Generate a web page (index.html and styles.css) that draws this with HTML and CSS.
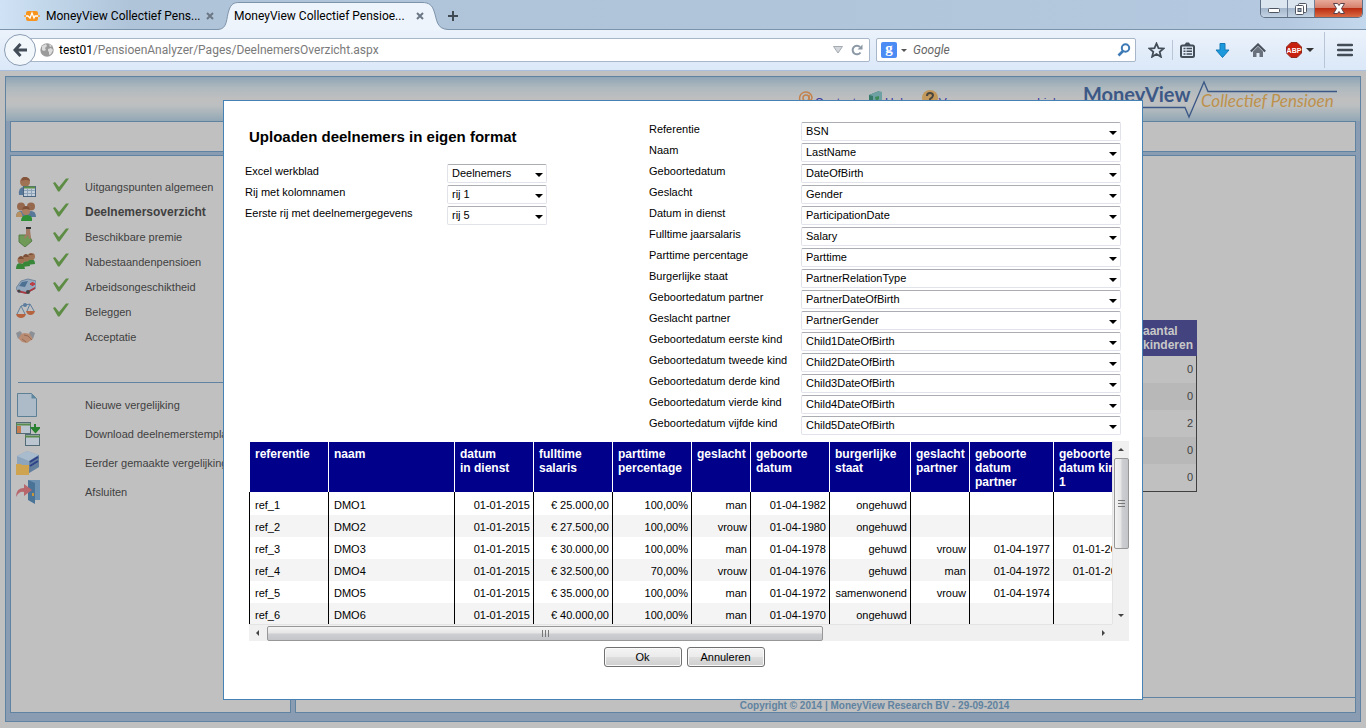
FILE: index.html
```html
<!DOCTYPE html>
<html lang="nl">
<head>
<meta charset="utf-8">
<title>MoneyView Collectief Pensioen</title>
<link rel="stylesheet" href="styles.css">
</head>
<body>
<header class="browser">
  <div class="tabstrip">
    <div class="tab">
      <svg class="favicon" width="16" height="16" viewBox="0 0 16 16"><rect x="2" y="3" width="12" height="10" rx="2" fill="#f7941d"/><path d="M0 8h4l2 2 2-5 2 5 1-2h5" fill="none" stroke="#fff" stroke-width="1.3"/><path d="M0 8h2M14 8h2" stroke="#f7941d" stroke-width="1.5"/></svg>
      <span class="tab-title">MoneyView Collectief Pens...</span>
      <button class="tab-close" aria-label="Tabblad sluiten"><svg width="8" height="8" viewBox="0 0 8 8"><path d="M1 1l6 6M7 1l-6 6" stroke="#6b7785" stroke-width="2"/></svg></button>
    </div>
    <div class="tab tab-active">
      <svg class="tab-shape" viewBox="0 0 230 30" preserveAspectRatio="none"><path d="M0 29.5C10 29 8 18 11 10C13 4 16 2.500 21 2.500H204C211 2.500 214 5 216 11C219 19 218 29 230 29.500V30H0Z" fill="#eef4fb"/><path d="M0 29.5C10 29 8 18 11 10C13 4 16 2.500 21 2.500H204C211 2.500 214 5 216 11C219 19 218 29 230 29.500" fill="none" stroke="#7d93aa"/></svg>
      <span class="tab-title">MoneyView Collectief Pensioe...</span>
      <button class="tab-close" aria-label="Tabblad sluiten"><svg width="8" height="8" viewBox="0 0 8 8"><path d="M1 1l6 6M7 1l-6 6" stroke="#6b7785" stroke-width="2"/></svg></button>
    </div>
    <button class="tab-new" aria-label="Nieuw tabblad"><svg width="10" height="10" viewBox="0 0 10 10"><path d="M5 0v10M0 5h10" stroke="#3f4a55" stroke-width="2"/></svg></button>
    <div class="window-buttons">
      <button class="wb" aria-label="Minimaliseren"><svg width="12" height="12" viewBox="0 0 12 12"><rect x=".5" y="5.500" width="11" height="4" rx="1" fill="#fff" stroke="#4f5561"/></svg></button>
      <button class="wb" aria-label="Verkleinen"><svg width="12" height="12" viewBox="0 0 12 12"><rect x="3.500" y=".5" width="8" height="9" rx="1" fill="#fff" stroke="#4f5561"/><rect x=".5" y="2.500" width="8" height="9" rx="1" fill="#fff" stroke="#4f5561"/><rect x="3" y="5.500" width="3" height="3" fill="#9fb0c2" stroke="#4f5561"/></svg></button>
      <button class="wb wb-close" aria-label="Sluiten"><svg width="12" height="11" viewBox="0 0 12 11"><path d="M.5 .5h4L6 2.500 7.500 .5h4L8.500 5.500l3 5h-4L6 8.500 4.500 10.500h-4l3-5z" fill="#fff" stroke="#5a4048"/></svg></button>
    </div>
  </div>
  <div class="toolbar">
    <button class="back" aria-label="Terug"><svg width="14" height="14" viewBox="0 0 14 14"><path d="M7.500 1L2 7l5.500 6M2.500 7H14" fill="none" stroke="#434d58" stroke-width="3"/></svg></button>
    <label class="urlbar">
      <svg width="14" height="14" viewBox="0 0 14 14"><circle cx="7" cy="7" r="6.700" fill="#9b9b9b"/><path d="M2 3l4-2 1 2-2 2 1 2-2 1-2-1zM8 6l3-1 2 2-2 4-2 1V9L8 8zM9 1l3 2-2 1z" fill="#dcdcdc"/></svg>
      <span class="url"><b>test01</b>/PensioenAnalyzer/Pages/DeelnemersOverzicht.aspx</span>
      <svg width="10" height="8" viewBox="0 0 10 8"><path d="M.5 .5h9L5 7z" fill="#d3d6da" stroke="#a5abb3"/></svg>
      <svg width="12" height="12" viewBox="0 0 12 12"><path d="M9.500 8.500A4.300 4.300 0 1 1 9 3" fill="none" stroke="#8b98a6" stroke-width="2"/><path d="M6.500 5.500H11.500V.5z" fill="#8b98a6"/></svg>
    </label>
    <div class="searchbar">
      <span class="engine">g</span><i class="caret"></i>
      <input class="search-input" type="text" placeholder="Google" aria-label="Zoeken">
      <svg width="14" height="14" viewBox="0 0 14 14"><circle cx="8.500" cy="5" r="3.700" fill="none" stroke="#3d7ab5" stroke-width="2"/><path d="M6 8L1.500 12.500" stroke="#3d7ab5" stroke-width="2.600"/></svg>
    </div>
    <div class="tools">
      <button class="tool" aria-label="Bladwijzer"><svg width="17" height="16" viewBox="0 0 17 16"><path d="M8.500 1.500l2 4.700 5 .4-3.800 3.300 1.200 4.900-4.400-2.700-4.400 2.700 1.200-4.900L1.500 6.600l5-.4z" fill="none" stroke="#434d58" stroke-width="1.800"/></svg></button>
      <i class="tool-sep"></i>
      <button class="tool" aria-label="Bladwijzers tonen"><svg width="15" height="16" viewBox="0 0 15 16"><rect x="1" y="3.500" width="13" height="11.500" rx="1.500" fill="none" stroke="#434d58" stroke-width="2"/><path d="M4 3.500l2-3h3l2 3z" fill="#434d58"/><path d="M3.500 6.500h2M3.500 9.200h2M3.500 12h2M6.500 6.500h5.500M6.500 9.200h5.500M6.500 12h5.500" stroke="#434d58" stroke-width="1.500"/></svg></button>
      <button class="tool" aria-label="Downloads"><svg width="15" height="15" viewBox="0 0 15 15"><path d="M5 .5h5V7h4L7.500 14.500 1 7h4z" fill="#1c98dc" stroke="#147ab6"/></svg></button>
      <button class="tool" aria-label="Startpagina"><svg width="16" height="15" viewBox="0 0 16 15"><path d="M.8 8.500L8 1.500l7.200 7" fill="none" stroke="#4a535d" stroke-width="2.200"/><path d="M3 8.500l5-5 5 5V14H9.500v-4h-3v4H3z" fill="#69727c"/></svg></button>
      <button class="tool tool-abp" aria-label="Adblock Plus"><svg width="16" height="16" viewBox="0 0 16 16"><path d="M5 .5h6L15.500 5v6L11 15.500H5L.5 11V5z" fill="#c8200f" stroke="#8e2a20"/><text x="8" y="10.500" class="abp">ABP</text></svg><i class="caret"></i></button>
      <i class="tool-sep tool-sep-tall"></i>
      <button class="tool" aria-label="Menu"><svg width="16" height="14" viewBox="0 0 16 14"><path d="M1 2h14M1 7h14M1 12h14" stroke="#434d58" stroke-width="2.500" stroke-linecap="round"/></svg></button>
    </div>
  </div>
</header>

<main class="viewport">
  <div class="frame">
    <div class="masthead">
      <nav class="links">
        <a href="#"><svg width="16" height="16" viewBox="0 0 16 16"><circle cx="8" cy="8" r="3" fill="none" stroke="#c4824c" stroke-width="1.500"/><path d="M11 5v5q3 1 3-3A6.300 6.300 0 1 0 12 13" fill="none" stroke="#c4824c" stroke-width="1.500"/></svg>Contact</a>
        <a href="#"><svg width="16" height="16" viewBox="0 0 16 16"><path d="M1 5l10-4v11L1 15z" fill="#36796a"/><path d="M1 5l4 1 9-4-3-1zM5 6v9l9-4V2z" fill="#6fa0a4"/><path d="M7 7l4-1v3l-3 2z" fill="#3d8a57"/></svg>Help</a>
        <a href="#"><svg width="16" height="16" viewBox="0 0 16 16"><circle cx="8" cy="8" r="8" fill="#c2995a"/><path d="M5 6q0-3 3-3t3 2.500Q11 7 8 9v2" fill="none" stroke="#4a4640" stroke-width="2"/></svg>Vragen en namen Links</a>
      </nav>
      <svg class="logo" width="262" height="42" viewBox="0 0 262 42" role="img" aria-label="MoneyView Collectief Pensioen"><path d="M3 30.500H104L108 40L123 5L127 14.500H256" fill="none" stroke="#3c5886" stroke-width="1.300"/><text x="2" y="25" class="logo-main">MoneyView</text><text x="120" y="30" class="logo-sub">Collectief Pensioen</text></svg>
    </div>
    <div class="box topbox"></div>
    <div class="columns">
      <nav class="box side">
        <ul class="menu">
          <li><svg width="20" height="20" viewBox="0 0 20 20"><path d="M3 18q-1-8 5-8t6 8z" fill="#58789a"/><circle cx="9" cy="5" r="5" fill="#a07355"/><path d="M5 4q1-5 5-4 4 1 4 4-4-2-9 0z" fill="#835439"/><rect x="7.500" y="9.500" width="12" height="10" fill="#c3cedb" stroke="#4c6580"/><path d="M8 10.500h11" stroke="#5f9144" stroke-width="2"/><path d="M8 13.500h11M8 16.500h11M11.500 12v7M15.500 12v7" stroke="#8ea2b8"/></svg><svg class="check" width="16" height="14" viewBox="0 0 16 14"><path d="M0 5l2-1 4 5 7-8.500L16 .5 6.500 13.500H5z" fill="#5d8c44"/></svg><a href="#">Uitgangspunten algemeen</a></li>
          <li class="current"><svg width="20" height="20" viewBox="0 0 20 20"><path d="M0 15q0-6 5-6t6 6zM10 15q0-6 5-6t5 6z" fill="#58789a"/><path d="M0 15q0-6 5-5l2 5z" fill="#b89163"/><circle cx="5" cy="4.500" r="4" fill="#96694e"/><circle cx="15" cy="4.500" r="4" fill="#96694e"/><path d="M5 19q0-6 6-6t5 6z" fill="#2f8f35"/><circle cx="10" cy="9" r="4" fill="#ab7f63"/><path d="M6 8q1-4 4-4t4 4q-4-2-8 0z" fill="#7e5038"/></svg><svg class="check" width="16" height="14" viewBox="0 0 16 14"><path d="M0 5l2-1 4 5 7-8.500L16 .5 6.500 13.500H5z" fill="#5d8c44"/></svg><a href="#">Deelnemersoverzicht</a></li>
          <li><svg width="20" height="20" viewBox="0 0 20 20"><path d="M3 8l10 0 3 6-7 6-6-5z" fill="#6f9a58" stroke="#587c48"/><path d="M10 2h4l1 9-2 1-1-4-3 4-1-2 2-3z" fill="#a37b64"/><path d="M10 0h5v2h-5z" fill="#333"/></svg><svg class="check" width="16" height="14" viewBox="0 0 16 14"><path d="M0 5l2-1 4 5 7-8.500L16 .5 6.500 13.500H5z" fill="#5d8c44"/></svg><a href="#">Beschikbare premie</a></li>
          <li><svg width="20" height="20" viewBox="0 0 20 20"><path d="M0 17q0-6 4-6t5 6zM6 15q0-6 4-6t4 5zM11 13q0-6 4-6t4 5z" fill="#388739"/><circle cx="5" cy="8" r="3.500" fill="#a07355"/><circle cx="10" cy="6" r="3.500" fill="#a07355"/><circle cx="15.500" cy="4.500" r="3.500" fill="#a07355"/><path d="M2 7q1-3 3-3t3 3zM7 5q1-3 3-3t3 3zM12 3q2-3 6 0z" fill="#7c4f39"/></svg><svg class="check" width="16" height="14" viewBox="0 0 16 14"><path d="M0 5l2-1 4 5 7-8.500L16 .5 6.500 13.500H5z" fill="#5d8c44"/></svg><a href="#">Nabestaandenpensioen</a></li>
          <li><svg width="20" height="20" viewBox="0 0 20 20"><path d="M0 11L5 4l7-2 8 2v7l-9 5-9-1z" fill="#93a7bd" stroke="#71869d"/><path d="M3 9l3-4 6-1-3 6z" fill="#4c7193"/><path d="M1 13l9 2 9-5v2l-9 5-8-2z" fill="#ab3941"/><path d="M14 7h5M16.500 5v4" stroke="#bb3f45" stroke-width="2"/><circle cx="12" cy="15" r="2" fill="#444"/><circle cx="3" cy="14" r="1.500" fill="#444"/></svg><svg class="check" width="16" height="14" viewBox="0 0 16 14"><path d="M0 5l2-1 4 5 7-8.500L16 .5 6.500 13.500H5z" fill="#5d8c44"/></svg><a href="#">Arbeidsongeschiktheid</a></li>
          <li><svg width="20" height="20" viewBox="0 0 20 20"><path d="M5 4l9-2M5 4L1 12M5 4l4 8M14 2l-3 7M14 2l4 7" stroke="#5c7d9d" fill="none"/><circle cx="9" cy="3" r="2" fill="#5c7d9d"/><path d="M0 12h10q-1 4-5 4t-5-4zM10 9h9q-1 4-4.500 4T10 9z" fill="#b5643f"/></svg><svg class="check" width="16" height="14" viewBox="0 0 16 14"><path d="M0 5l2-1 4 5 7-8.500L16 .5 6.500 13.500H5z" fill="#5d8c44"/></svg><a href="#">Beleggen</a></li>
          <li><svg width="20" height="20" viewBox="0 0 20 20"><path d="M3 7l6-1 6 1 2 5-6 4-5-1-4-4z" fill="#b98c74"/><path d="M8 8l4 1 4 4M6 12l4 3" stroke="#976a55" fill="none"/><path d="M0 6l4-2 2 2-4 6zM19 6l-4-2-2 2 4 6z" fill="#8b9097"/></svg><span class="check"></span><a href="#">Acceptatie</a></li>
        </ul>
        <ul class="menu actions">
          <li><svg width="24" height="24" viewBox="0 0 24 24"><path d="M1.500 .5h14l5 5v18h-19z" fill="#adbbc8" stroke="#5d8097"/><path d="M15.500 .5v5h5z" fill="#5f88a0"/></svg><span class="check"></span><a href="#">Nieuwe vergelijking</a></li>
          <li><svg width="24" height="24" viewBox="0 0 24 24"><rect x=".5" y=".5" width="14" height="11" fill="#bcc6d0" stroke="#526b77"/><path d="M0 2.500h15" stroke="#5b8a4d" stroke-width="2"/><path d="M1 4h4v7H1z" fill="#c47b4d"/><rect x="9.500" y="12.500" width="14" height="11" fill="#bcc6d0" stroke="#526b77"/><path d="M9 14.500h15" stroke="#5b8a4d" stroke-width="2"/><path d="M19 2v4M16 6l3.500 4L23 6z" fill="#28812e" stroke="#28812e" stroke-width="2"/></svg><span class="check"></span><a href="#">Download deelnemerstemplate</a></li>
          <li><svg width="24" height="24" viewBox="0 0 24 24"><path d="M1 5l10-5 12 4v12l-10 6-12-5z" fill="#8ca5bd"/><path d="M1 5l10-5 12 4-10 6z" fill="#a9bccd"/><path d="M13 10l10-6v12l-10 6z" fill="#637f9d"/><path d="M14 11l8-5M14 15l8-5" stroke="#2f4289" stroke-width="2"/><path d="M0 13h5l1 1h7v10H0z" fill="#cfa450"/></svg><span class="check"></span><a href="#">Eerder gemaakte vergelijkingen</a></li>
          <li><svg width="24" height="24" viewBox="0 0 24 24"><path d="M12 0h12v20H12z" fill="#6d91b1"/><path d="M12 0l7 3v21l-7-4z" fill="#4a7398"/><path d="M17 13v3" stroke="#c6943d" stroke-width="2"/><path d="M0 17q0-9 8-9V4l8 6-8 6v-4q-5-1-8 5z" fill="#b7666c"/></svg><span class="check"></span><a href="#">Afsluiten</a></li>
        </ul>
      </nav>
      <section class="box content">
        <div class="content-body">
          <table class="backtable">
            <thead><tr><th>aantal<br>kinderen</th></tr></thead>
            <tbody><tr><td>0</td></tr><tr><td>0</td></tr><tr><td>2</td></tr><tr><td>0</td></tr><tr><td>0</td></tr></tbody>
          </table>
        </div>
        <footer class="copyright">Copyright © 2014 | MoneyView Research BV - 29-09-2014</footer>
      </section>
    </div>
  </div>

  <div class="overlay">
  <form class="dialog" role="dialog" aria-labelledby="dlg-title">
    <div class="settings">
      <div class="source">
        <h1 id="dlg-title">Uploaden deelnemers in eigen format</h1>
        <div class="field"><label for="s1">Excel werkblad</label><span class="drop"><select id="s1"><option>Deelnemers</option></select></span></div>
        <div class="field"><label for="s2">Rij met kolomnamen</label><span class="drop"><select id="s2"><option>rij 1</option></select></span></div>
        <div class="field"><label for="s3">Eerste rij met deelnemergegevens</label><span class="drop"><select id="s3"><option>rij 5</option></select></span></div>
      </div>
      <div class="mapping">
        <div class="field"><label for="m1">Referentie</label><span class="drop"><select id="m1"><option>BSN</option></select></span></div>
        <div class="field"><label for="m2">Naam</label><span class="drop"><select id="m2"><option>LastName</option></select></span></div>
        <div class="field"><label for="m3">Geboortedatum</label><span class="drop"><select id="m3"><option>DateOfBirth</option></select></span></div>
        <div class="field"><label for="m4">Geslacht</label><span class="drop"><select id="m4"><option>Gender</option></select></span></div>
        <div class="field"><label for="m5">Datum in dienst</label><span class="drop"><select id="m5"><option>ParticipationDate</option></select></span></div>
        <div class="field"><label for="m6">Fulltime jaarsalaris</label><span class="drop"><select id="m6"><option>Salary</option></select></span></div>
        <div class="field"><label for="m7">Parttime percentage</label><span class="drop"><select id="m7"><option>Parttime</option></select></span></div>
        <div class="field"><label for="m8">Burgerlijke staat</label><span class="drop"><select id="m8"><option>PartnerRelationType</option></select></span></div>
        <div class="field"><label for="m9">Geboortedatum partner</label><span class="drop"><select id="m9"><option>PartnerDateOfBirth</option></select></span></div>
        <div class="field"><label for="m10">Geslacht partner</label><span class="drop"><select id="m10"><option>PartnerGender</option></select></span></div>
        <div class="field"><label for="m11">Geboortedatum eerste kind</label><span class="drop"><select id="m11"><option>Child1DateOfBirth</option></select></span></div>
        <div class="field"><label for="m12">Geboortedatum tweede kind</label><span class="drop"><select id="m12"><option>Child2DateOfBirth</option></select></span></div>
        <div class="field"><label for="m13">Geboortedatum derde kind</label><span class="drop"><select id="m13"><option>Child3DateOfBirth</option></select></span></div>
        <div class="field"><label for="m14">Geboortedatum vierde kind</label><span class="drop"><select id="m14"><option>Child4DateOfBirth</option></select></span></div>
        <div class="field"><label for="m15">Geboortedatum vijfde kind</label><span class="drop"><select id="m15"><option>Child5DateOfBirth</option></select></span></div>
      </div>
    </div>
    <div class="scrollbox">
      <div class="scrollarea">
        <table class="preview">
          <colgroup><col class="c79"><col class="c126"><col class="c79"><col class="c79"><col class="c79"><col class="c59"><col class="c79"><col class="c81"><col class="c59"><col class="c84"><col class="c79"></colgroup>
          <thead><tr><th>referentie</th><th>naam</th><th>datum<br>in dienst</th><th>fulltime<br>salaris</th><th>parttime<br>percentage</th><th>geslacht</th><th>geboorte<br>datum</th><th>burgerlijke<br>staat</th><th>geslacht<br>partner</th><th>geboorte<br>datum<br>partner</th><th>geboorte<br>datum kind<br>1</th></tr></thead>
          <tbody>
            <tr><td>ref_1</td><td>DMO1</td><td>01-01-2015</td><td>€ 25.000,00</td><td>100,00%</td><td>man</td><td>01-04-1982</td><td>ongehuwd</td><td></td><td></td><td></td></tr>
            <tr><td>ref_2</td><td>DMO2</td><td>01-01-2015</td><td>€ 27.500,00</td><td>100,00%</td><td>vrouw</td><td>01-04-1980</td><td>ongehuwd</td><td></td><td></td><td></td></tr>
            <tr><td>ref_3</td><td>DMO3</td><td>01-01-2015</td><td>€ 30.000,00</td><td>100,00%</td><td>man</td><td>01-04-1978</td><td>gehuwd</td><td>vrouw</td><td>01-04-1977</td><td>01-01-2001</td></tr>
            <tr><td>ref_4</td><td>DMO4</td><td>01-01-2015</td><td>€ 32.500,00</td><td>70,00%</td><td>vrouw</td><td>01-04-1976</td><td>gehuwd</td><td>man</td><td>01-04-1972</td><td>01-01-2001</td></tr>
            <tr><td>ref_5</td><td>DMO5</td><td>01-01-2015</td><td>€ 35.000,00</td><td>100,00%</td><td>man</td><td>01-04-1972</td><td>samenwonend</td><td>vrouw</td><td>01-04-1974</td><td></td></tr>
            <tr><td>ref_6</td><td>DMO6</td><td>01-01-2015</td><td>€ 40.000,00</td><td>100,00%</td><td>man</td><td>01-04-1970</td><td>ongehuwd</td><td></td><td></td><td></td></tr>
          </tbody>
        </table>
      </div>
      <div class="vbar"><i class="arrow up"></i><div class="thumb"><i></i><i></i><i></i></div><i class="arrow down"></i></div>
      <div class="hbar"><i class="arrow left"></i><div class="thumb"><i></i><i></i><i></i></div><i class="arrow right"></i></div>
      <div class="corner"></div>
    </div>
    <div class="buttons"><button type="button">Ok</button><button type="button">Annuleren</button></div>
  </form>
  </div>
</main>
</body>
</html>
```
FILE: styles.css
```css
* { box-sizing: border-box; }
body { margin: 0; height: 100vh; display: flex; flex-direction: column; overflow: hidden; font: 11px/14px "Liberation Sans", Arial, sans-serif; color: #000; background: #c0c0c0; }
button { font: inherit; color: inherit; padding: 0; border: 0; background: none; }
ul { list-style: none; margin: 0; padding: 0; }
svg { display: block; flex: none; }

/* Browser window */
.browser { flex: none; font: 12px/16px Roboto, "Noto Sans", sans-serif; }
.tabstrip { display: flex; height: 30px; background: linear-gradient(90deg, #cfe2f6 0, #c4d8ec 40px, #b0c4d9 130px, #b1c5da 60%, #b4c9df 94%, #c3d8ed); border-bottom: 1px solid #7d93aa; }
.tab { display: flex; align-items: center; padding: 2px 12px 0 24px; width: 226px; }
.favicon { margin-right: 6px; }
.tab-title { flex: 1; white-space: nowrap; }
.tab-close, .tab-new { display: flex; align-items: center; }
.tab-active { position: relative; height: 30px; width: 222px; padding: 2px 24px 0 8px; }
.tab-shape { position: absolute; left: -8px; top: 0; width: 230px; height: 30px; }
.tab-active .tab-title, .tab-active .tab-close { position: relative; }
.tab-new { padding: 2px 0 0; }
.window-buttons { display: flex; margin: 0 3px 0 auto; height: 18px; border: 1px solid #5f6f84; border-top: 0; border-radius: 0 0 5px 5px; overflow: hidden; }
.wb { display: flex; align-items: center; justify-content: center; width: 27px; border-right: 1px solid #6f8097; background: linear-gradient(#dbe5f0 0 45%, #a5b7cc 50%, #c3d3e4); }
.wb-close { width: 47px; border: 0; background: linear-gradient(#e8aa9b 0, #d6806d 45%, #bb2d12 50%, #d96b45); }
.toolbar { display: flex; align-items: center; height: 41px; padding-left: 4px; background: linear-gradient(#ebf2fb, #dbe8f8); border-bottom: 1px solid #a9bfdc; }
.back { position: relative; display: flex; align-items: center; justify-content: center; width: 32px; height: 32px; margin-right: -14px; border: 1px solid #8b9db3; border-radius: 50%; background: #f2f7fc; z-index: 1; }
.urlbar { flex: 1; display: flex; align-items: center; gap: 8px; height: 24px; padding: 0 6px 0 17px; border: 1px solid #a7b6c9; background: #fff; border-radius: 2px; }
.url { flex: 1; margin-left: -3px; color: #7a7a7a; }
.url b { font-weight: 400; color: #000; }
.searchbar { display: flex; align-items: center; width: 260px; height: 24px; margin-left: 6px; padding: 0 4px; border: 1px solid #a7b6c9; border-radius: 2px; background: #fff; }
.engine { width: 16px; height: 16px; margin-right: 4px; border-radius: 2px; background: #4b8bf4; color: #fff; font: bold 15px/13px "Liberation Serif", serif; text-align: center; }
.caret { border: 3px solid transparent; border-top-color: #555; border-bottom: 0; }
.search-input { flex: 1; min-width: 0; margin-left: 6px; padding: 0; border: 0; background: none; font: italic 12px/16px Roboto, sans-serif; }
.search-input::placeholder { color: #666; opacity: 1; }
.tools { display: flex; align-items: center; gap: 20px; height: 40px; padding: 0 13px 0 12px; }
.tool { display: flex; align-items: center; }
.tool .caret { margin-left: 4px; border-width: 4px 4px 0; border-top-color: #333; }
.tool-sep { width: 1px; height: 20px; background: #b7c5d6; margin: 0 -13px; }
.tool-sep-tall { height: 36px; margin: 0 -8px 0 -10px; }
.abp { font: bold 7px "Liberation Sans", sans-serif; fill: #fff; text-anchor: middle; }

/* Page behind the dialog */
.viewport { flex: 1; min-height: 0; position: relative; display: flex; padding: 5px 5px 6px; }
.frame { flex: 1; min-width: 0; display: flex; flex-direction: column; padding: 0 4px 8px; border: 1px solid #5f83a1; background: #8a9cb2; color: #404040; }
.masthead { flex: none; height: 44px; margin: 0 -4px; padding-right: 17px; display: flex; justify-content: flex-end; background: linear-gradient(#8fa5b5, #afb9be 25%, #bfbfbf 50%, #bcbfc0 65%, #92a7b5); }
.links { display: flex; align-items: flex-start; gap: 12px; padding-top: 13px; margin-right: 16px; }
.links a { display: flex; color: #3838a0; font-size: 12px; line-height: 26px; height: 16px; text-decoration: none; }
.links svg { margin-right: 1px; }
.logo-main { font: bold 20px Lato, sans-serif; fill: #3c5886; }
.logo-sub { font: italic 17px Lato, sans-serif; fill: #bd914c; }
.box { border: 1px solid #5f83a1; background: #c0c0c0; }
.topbox { flex: none; height: 31px; margin-bottom: 3px; }
.columns { flex: 1; display: grid; grid-template-columns: 281px 1fr; gap: 4px; min-height: 0; }
.side { padding: 18px 6px 0 5px; }
.menu li { display: flex; align-items: center; height: 25px; }
.menu li > svg:first-child { width: 20px; }
.menu .check { width: 16px; height: 14px; margin: 0 16px 4px 17px; }
.menu a { color: inherit; text-decoration: none; white-space: nowrap; }
.menu .current { font-weight: bold; font-size: 12px; }
.actions { margin-top: 33px; padding-top: 7px; border-top: 1px solid #5f83a1; margin-left: 2px; }
.actions li { height: 29px; margin-left: -2px; }
.menu.actions li > svg:first-child { width: 24px; }
.menu.actions .check { margin-left: 13px; }
.content { display: flex; flex-direction: column; }
.content-body { flex: 1; padding: 164px 158px 0 0; }
.backtable { width: 66px; margin-left: auto; border-collapse: separate; border-spacing: 0; }
.backtable th { height: 36px; padding: 0 3px 0 12px; background: #43437f; color: #c8c8c8; font-size: 12px; text-align: left; }
.backtable td { height: 27px; padding: 0 3px 1px 0; text-align: right; border-right: 1px solid #404040; }
.backtable tr:nth-child(even) td { background: #b8b8b8; }
.backtable tbody tr:last-child td { height: 28px; border-bottom: 1px solid #404040; }
.copyright { height: 15px; border-top: 1px solid #5f83a1; line-height: 15px; font-weight: bold; font-size: 10px; color: #5f83a1; padding-left: 98px; text-align: center; }

/* Dialog */
.overlay { position: absolute; inset: 0; display: flex; align-items: flex-start; justify-content: center; padding-top: 29px; }
.dialog { width: 920px; padding: 21px 13px 32px 21px; border: 1px solid #4682b4; background: #fff; }
.settings { display: grid; grid-template-columns: 302px 472px; justify-content: space-between; padding-right: 8px; }
h1 { margin: 7px 0 19px 4px; font-size: 15px; line-height: 16px; white-space: nowrap; }
.field { display: grid; grid-template-columns: 1fr 100px; height: 21px; }
.mapping .field { grid-template-columns: 152px 1fr; }
.drop { position: relative; height: 19px; }
.drop::after { content: ""; position: absolute; right: 4px; top: 9px; border: 4px solid transparent; border-top-color: #000; border-bottom: 0; pointer-events: none; }
select { appearance: none; display: block; width: 100%; height: 19px; padding: 0 16px 0 4px; border: 1px solid #e2e3ea; border-top-color: #abadb3; border-radius: 2px; background: #fff; color: #000; font: 11px/17px "Liberation Sans", Arial, sans-serif; }
.scrollbox { display: grid; grid-template-columns: minmax(0, 1fr) 17px; grid-template-rows: 183px 17px; margin: 4px 0 6px 4px; }
.scrollarea { overflow: hidden; padding-top: 1px; }
.preview { width: 883px; table-layout: fixed; border-collapse: separate; border-spacing: 0; }
.c59 { width: 59px; } .c79 { width: 79px; } .c81 { width: 81px; } .c84 { width: 84px; } .c126 { width: 126px; }
.preview th { height: 50px; padding: 5px 0 0 5px; vertical-align: top; text-align: left; white-space: nowrap; font-size: 12px; background: #00008b; color: #fff; border-left: 1px solid #fff; }
.preview td { height: 22px; padding: 1px 3px 0 0; text-align: right; white-space: nowrap; border-left: 1px solid #000; }
.preview td:nth-child(-n+2) { text-align: left; padding-left: 5px; }
.preview tbody tr:first-child td { height: 23px; padding-top: 3px; }
.preview tbody tr:nth-child(even) td { background: #f4f4f4; }
.vbar, .hbar, .corner { background: #f0f0f0; }
.vbar { display: flex; flex-direction: column; align-items: center; border-left: 1px solid #e4e4e4; }
.hbar { display: flex; align-items: center; border-top: 1px solid #e4e4e4; }
.arrow { flex: none; width: 0; height: 0; border: 3px solid transparent; }
.up { border-bottom-color: #444; border-top: 0; margin: 7px 0; }
.down { border-top-color: #444; border-bottom: 0; margin: auto 0 7px; }
.left { border-right-color: #444; border-left: 0; margin: 0 8px 0 7px; }
.right { border-left-color: #444; border-right: 0; margin: 0 7px 0 auto; }
.thumb { display: flex; align-items: center; justify-content: center; gap: 2px; border: 1px solid #979797; border-radius: 2px; }
.thumb i { background: #777; }
.vbar .thumb { flex-direction: column; width: 15px; height: 91px; background: linear-gradient(90deg, #f4f4f4, #e6e6e6 45%, #cdced1 55%, #c4c5c8); }
.vbar .thumb i { width: 7px; height: 1px; }
.hbar .thumb { width: 556px; height: 15px; background: linear-gradient(#f4f4f4, #e6e6e6 45%, #cdced1 55%, #c4c5c8); }
.hbar .thumb i { width: 1px; height: 7px; }
.buttons { display: flex; justify-content: center; gap: 5px; padding-right: 6px; }
.buttons button { width: 78px; height: 20px; border: 1px solid #707070; border-radius: 3px; background: linear-gradient(#f4f4f4, #ebebeb 48%, #dddddd 52%, #cfcfcf); box-shadow: inset 0 0 0 1px #fafafa; }
```
